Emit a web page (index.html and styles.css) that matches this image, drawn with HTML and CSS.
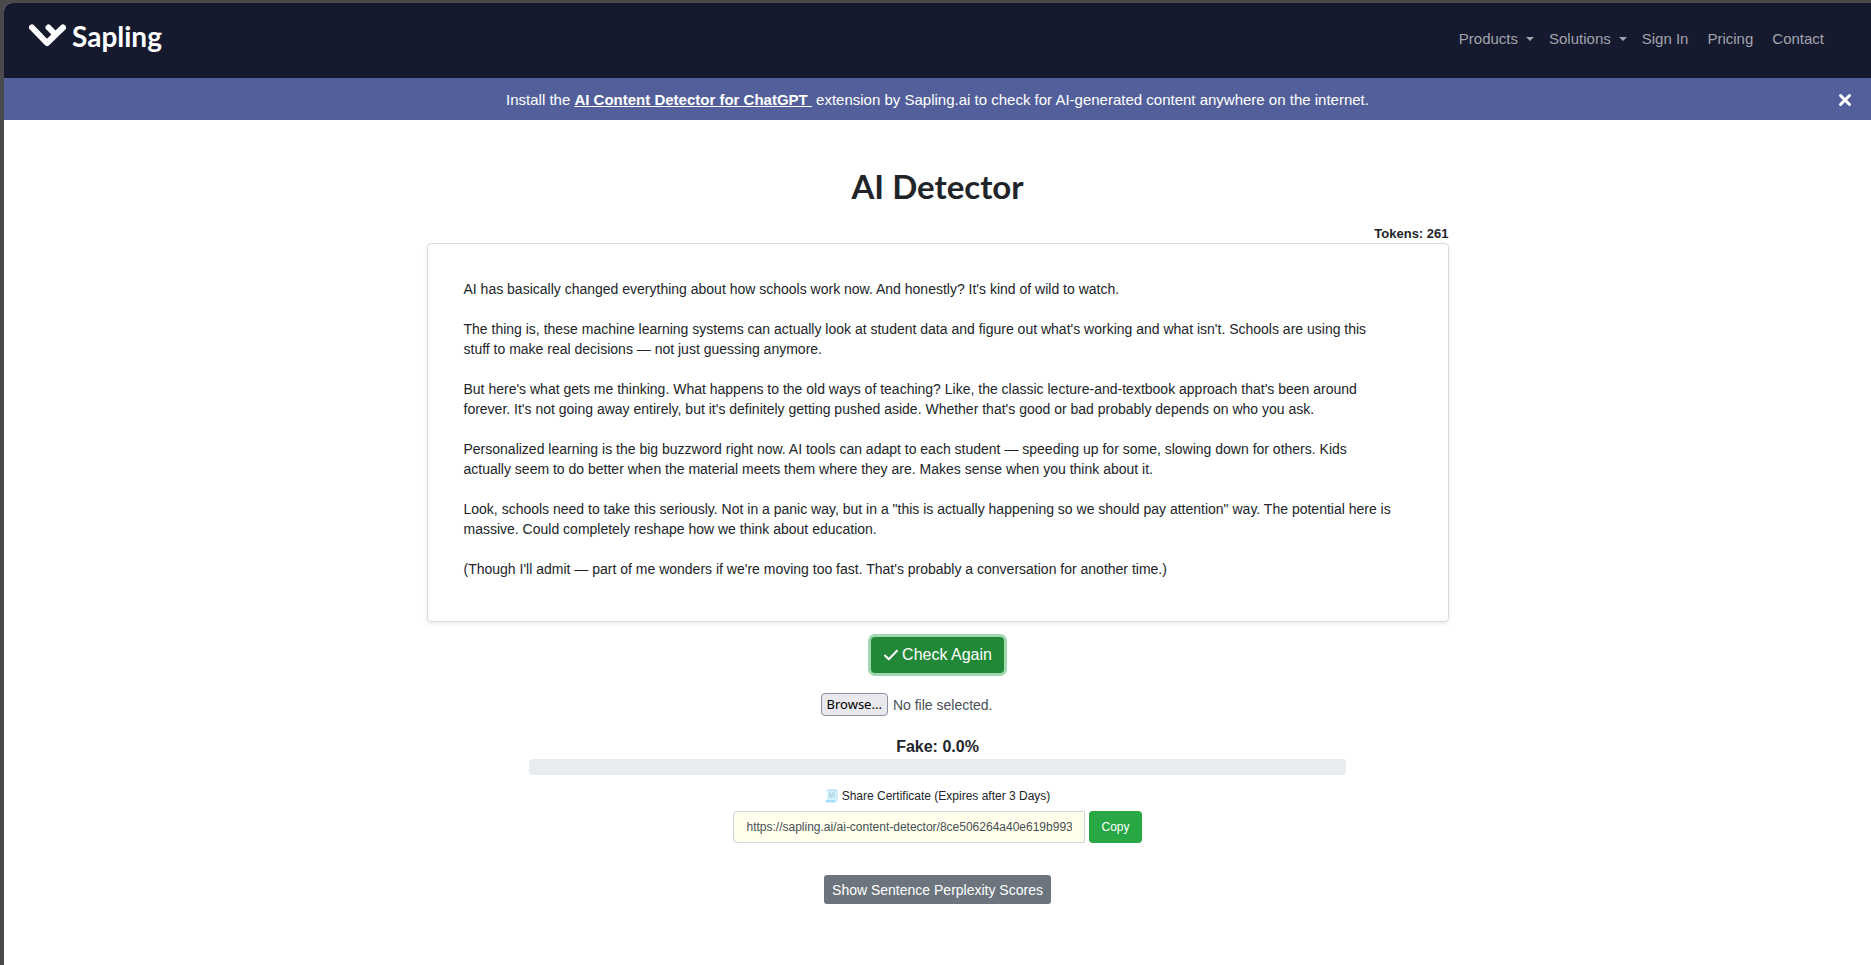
FILE: index.html
```html
<!DOCTYPE html>
<html lang="en">
<head>
<meta charset="utf-8">
<title>AI Detector | Sapling</title>
<link rel="stylesheet" href="styles.css">
</head>
<body>
<div class="page">
  <header class="navbar">
    <a class="brand" href="#" aria-label="Sapling">
      <svg class="brand-mark" viewBox="0 0 38 24" width="38" height="24" aria-hidden="true">
        <path d="M4 3.500 L19 19 L35 3.500 M20.500 3.500 L27 10" fill="none" stroke="#fff" stroke-width="6" stroke-linecap="round" stroke-linejoin="round"/>
      </svg>
      <span class="brand-name">Sapling</span>
    </a>
    <nav class="nav-links">
      <a class="has-menu" href="#">Products</a>
      <a class="has-menu" href="#">Solutions</a>
      <a href="#">Sign In</a>
      <a href="#">Pricing</a>
      <a href="#">Contact</a>
    </nav>
  </header>

  <div class="banner">
    <p class="banner-text">Install the <a href="#">AI Content Detector for ChatGPT&nbsp;</a> extension by Sapling.ai to check for AI-generated content anywhere on the internet.</p>
    <button class="banner-close" type="button" aria-label="Close">
      <svg viewBox="0 0 14 14" width="14" height="14" aria-hidden="true"><path d="M2.5 2.5 L11.5 11.5 M11.5 2.5 L2.5 11.5" stroke="#fff" stroke-width="3" stroke-linecap="round"/></svg>
    </button>
  </div>

  <main class="content">
    <h1>AI Detector</h1>
    <p class="tokens">Tokens: 261</p>
    <div class="editor" contenteditable="true" role="textbox" aria-multiline="true" aria-label="Text to check" spellcheck="false">
      <p>AI has basically changed everything about how schools work now. And honestly? It's kind of wild to watch.</p>
      <p>The thing is, these machine learning systems can actually look at student data and figure out what's working and what isn't. Schools are using this<br>stuff to make real decisions — not just guessing anymore.</p>
      <p>But here's what gets me thinking. What happens to the old ways of teaching? Like, the classic lecture-and-textbook approach that's been around<br>forever. It's not going away entirely, but it's definitely getting pushed aside. Whether that's good or bad probably depends on who you ask.</p>
      <p>Personalized learning is the big buzzword right now. AI tools can adapt to each student — speeding up for some, slowing down for others. Kids<br>actually seem to do better when the material meets them where they are. Makes sense when you think about it.</p>
      <p>Look, schools need to take this seriously. Not in a panic way, but in a "this is actually happening so we should pay attention" way. The potential here is<br>massive. Could completely reshape how we think about education.</p>
      <p>(Though I'll admit — part of me wonders if we're moving too fast. That's probably a conversation for another time.)</p>
    </div>

    <button class="check" type="button">
      <svg viewBox="0 0 16 16" width="16" height="16" aria-hidden="true"><path d="M2 8.5 L5.8 12.3 L14 3.7" fill="none" stroke="#fff" stroke-width="2" stroke-linecap="round" stroke-linejoin="round"/></svg>
      Check Again
    </button>

    <div class="file-row">
      <input class="file-input" id="upload" type="file">
      <label class="file-button" for="upload">Browse...</label>
      <span class="file-name">No file selected.</span>
    </div>

    <p class="score" id="score-label">Fake: 0.0%</p>
    <div class="progress" role="progressbar" aria-labelledby="score-label" aria-valuenow="0" aria-valuemin="0" aria-valuemax="100"></div>

    <label class="share-label" for="share-url">
      <svg viewBox="0 0 13 14" width="13" height="14" aria-hidden="true">
        <path d="M2 .5 H12 V13 H2 Z" fill="#d8f1fd"/>
        <path d="M2 .5 H12.500 V2 H2 Z M11.500 1 H12.500 V12 H11.500 Z" fill="#b5e3fa"/>
        <path d="M.5 11 H9.500 L11 13.500 H2 Q.5 13.500 .5 11 Z" fill="#a4dbf8"/>
        <path d="M4 4 H6 M7 4 H10 M4 6 H10 M4 8 H8 M9 8 H10" stroke="#9cc9de" stroke-width="1"/>
      </svg>
      Share Certificate (Expires after 3 Days)
    </label>
    <div class="share-row">
      <input class="share-url" id="share-url" type="text" readonly value="https://sapling.ai/ai-content-detector/8ce506264a40e619b993">
      <button class="copy" type="button">Copy</button>
    </div>

    <button class="perplexity" type="button">Show Sentence Perplexity Scores</button>
  </main>
</div>
</body>
</html>
```

FILE: styles.css
```css
* { box-sizing: border-box; }

body {
  margin: 0;
  padding: 3px 0 0 4px;
  background: #4a4a4a;
  color: #212529;
  font-family: "Liberation Sans", Arial, sans-serif;
  font-size: 14px;
}

p, h1 { margin: 0; }

button, input { font-family: inherit; }

.page {
  min-height: calc(100vh - 3px);
  background: #fff;
  border-top-left-radius: 8px;
  overflow: hidden;
}

.navbar {
  display: flex;
  justify-content: space-between;
  align-items: flex-start;
  height: 75px;
  padding: 15px 47px 0 24px;
  background: #161a2f;
}

.brand {
  display: flex;
  gap: 6px;
  align-items: center;
  color: #fff;
  text-decoration: none;
}

.brand-name {
  font: 700 28px/36px Lato, sans-serif;
}

.nav-links {
  display: flex;
  gap: 19px;
  padding-top: 10px;
}

.nav-links a {
  color: #a2a3ac;
  font-size: 15px;
  line-height: 22px;
  text-decoration: none;
}

.nav-links .has-menu { margin-right: -4px; }

.nav-links .has-menu::after {
  content: "";
  display: inline-block;
  margin-left: 8px;
  border: 4px solid transparent;
  border-top-color: currentColor;
  border-bottom: 0;
  vertical-align: 3px;
}

.banner {
  position: relative;
  display: flex;
  justify-content: center;
  align-items: center;
  height: 42px;
  background: #535f9b;
  color: #fff;
  font-size: 15px;
}

.banner a {
  color: #fff;
  font-weight: 700;
}

.banner-close {
  position: absolute;
  right: 19px;
  top: 15px;
  width: 14px;
  height: 14px;
  padding: 0;
  border: 0;
  background: none;
}

.banner-close svg { display: block; }

.content {
  display: flex;
  flex-direction: column;
  align-items: center;
  max-width: 1054px;
  margin: 0 auto;
  padding: 42px 16px;
}

h1 {
  font: 700 33px/48px Lato, sans-serif;
}

.tokens {
  align-self: flex-end;
  margin-top: 15px;
  padding-bottom: 1px;
  font-size: 13px;
  font-weight: 700;
  line-height: 17px;
}

.editor {
  display: flex;
  flex-direction: column;
  gap: 20px;
  width: 100%;
  padding: 35px 36px 42px;
  border: 1px solid #d9dadc;
  border-radius: 4px;
  box-shadow: 0 2px 4px rgba(0, 0, 0, 0.08);
  font-size: 14px;
  line-height: 20px;
}

.check {
  display: flex;
  align-items: center;
  gap: 3px;
  margin-top: 15px;
  padding: 0 12px;
  height: 36px;
  border: 0;
  border-radius: 4px;
  background: #218838;
  box-shadow: 0 0 0 3px #a1d8ad;
  color: #fff;
  font-size: 16px;
}

.file-row {
  display: flex;
  align-items: center;
  gap: 5px;
  width: 234px;
  margin-top: 20px;
}

.file-input {
  position: absolute;
  width: 1px;
  height: 1px;
  opacity: 0;
}

.file-button {
  padding: 0 5px;
  border: 1px solid #8f8f9d;
  border-radius: 4px;
  background: #e9e9ed;
  color: #000;
  font: 400 13px/21px "Noto Sans", sans-serif;
}

.file-name { color: #495057; }

.score {
  margin-top: 19px;
  font-size: 16px;
  font-weight: 700;
  line-height: 24px;
}

.progress {
  width: 80%;
  height: 16px;
  border-radius: 4px;
  background: #e9ecef;
}

.share-label {
  display: flex;
  align-items: center;
  gap: 4px;
  margin-top: 12px;
  font-size: 12px;
  line-height: 18px;
}

.share-row {
  display: flex;
  gap: 4px;
  margin-top: 6px;
}

.share-url {
  width: 352px;
  height: 32px;
  padding: 0 12px;
  border: 1px solid #ced4da;
  border-radius: 4px 0 0 4px;
  background: #ffffec;
  color: #495057;
  font-size: 12px;
}

.copy {
  height: 32px;
  padding: 0 12px;
  border: 0;
  border-radius: 4px;
  background: #28a745;
  color: #fff;
  font-size: 12px;
}

.perplexity {
  height: 29px;
  margin-top: 32px;
  padding: 0 8px;
  border: 0;
  border-radius: 3px;
  background: #6c757d;
  color: #fff;
  font-size: 14px;
}
```
